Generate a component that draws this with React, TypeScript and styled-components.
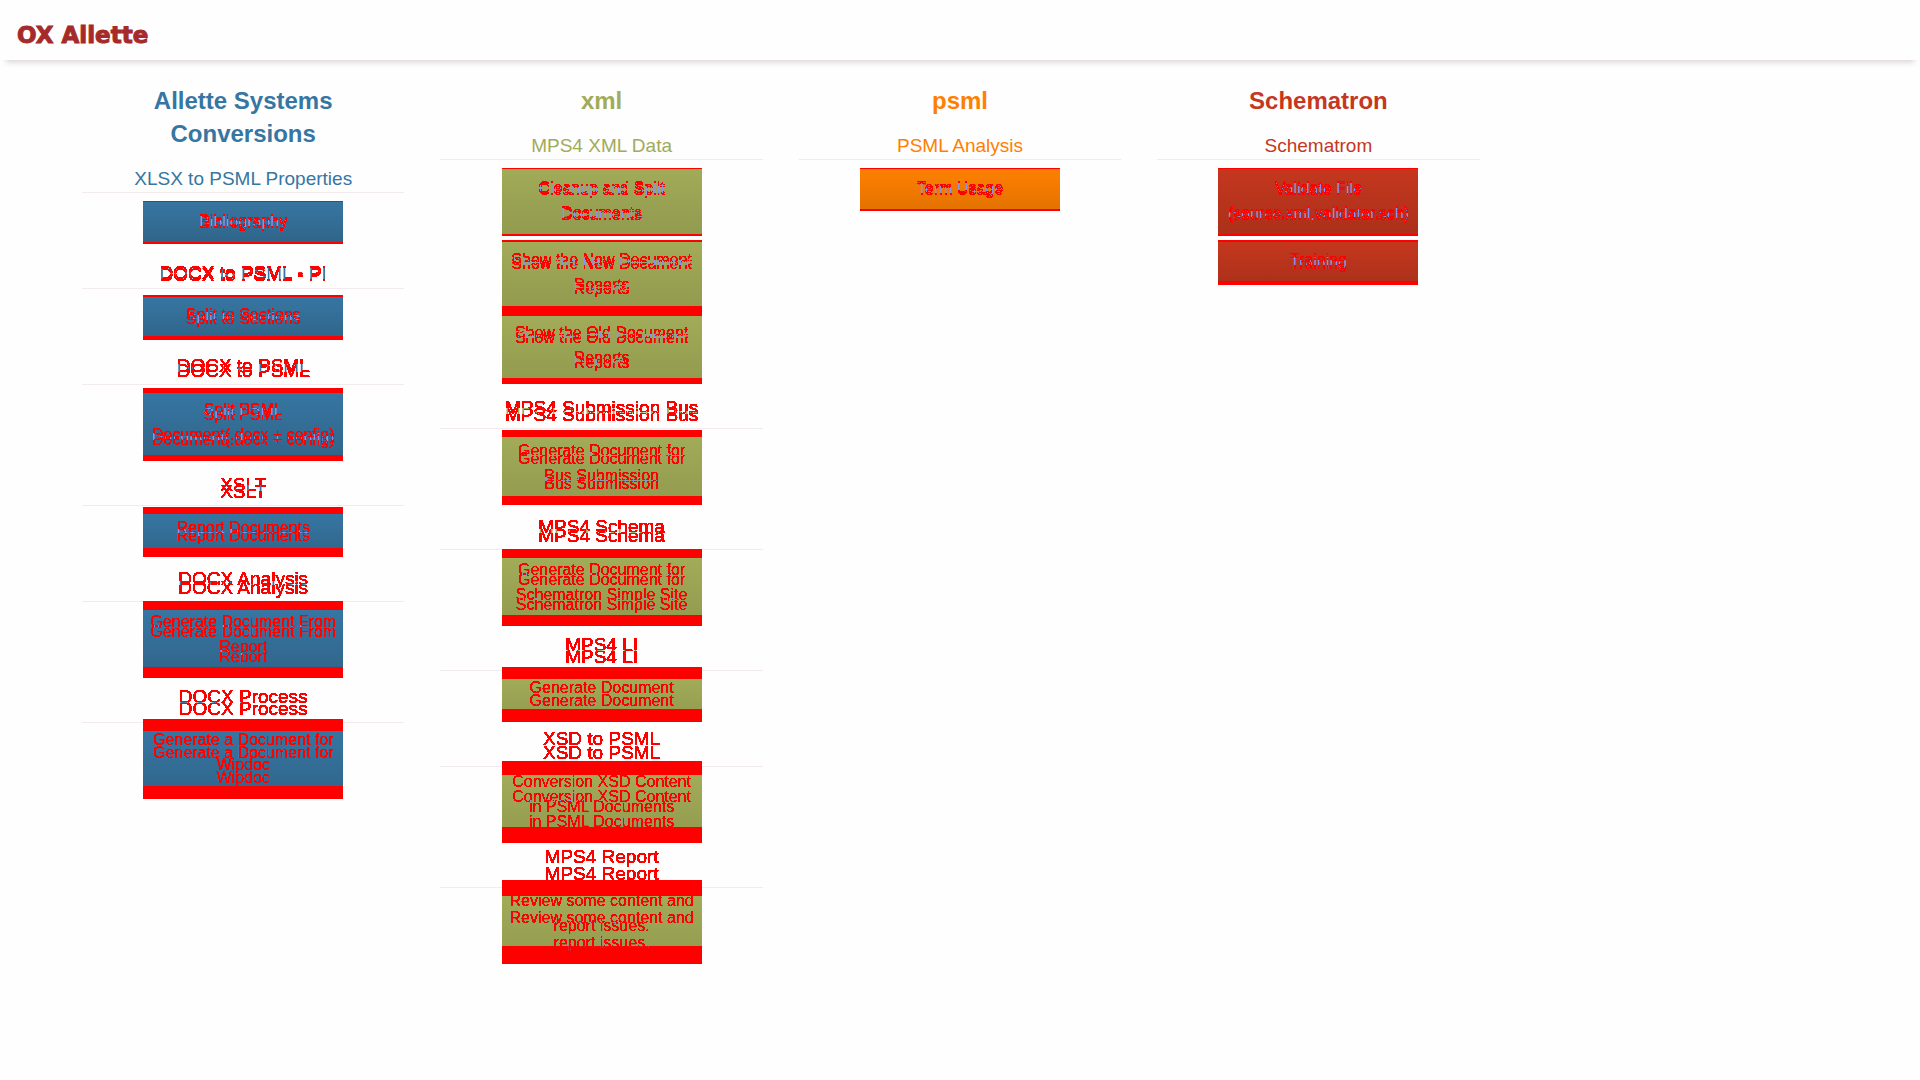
import React from "react";
import styled, { createGlobalStyle, css } from "styled-components";

const GlobalStyle = createGlobalStyle`
  * { box-sizing: border-box; }
  body {
    margin: 0;
    background: #fefefe;
    font-family: "Liberation Sans", Arial, sans-serif;
  }
`;

const RED = "#ff0000";

type Action = { label: string; top: number; bottom: number; shift: number };
type Group = { name: string; shift: number; actions: Action[] };
type Category = { title: string; from: string; to: string; groups: Group[] };

const act = (label: string, top: number, bottom: number, shift: number): Action => ({
  label,
  top,
  bottom,
  shift,
});

const categories: Category[] = [
  {
    title: "Allette Systems Conversions",
    from: "#3676a2",
    to: "#306489",
    groups: [
      { name: "XLSX to PSML Properties", shift: 0, actions: [act("Bibliography", 0, 2, 2)] },
      { name: "DOCX to PSML - PI", shift: 2, actions: [act("Split to Sections", 2, 4, 4)] },
      { name: "DOCX to PSML", shift: 5, actions: [act("Split PSML Document(.docx + config)", 5, 6, 5)] },
      { name: "XSLT", shift: 7, actions: [act("Report Documents", 7, 9, 8)] },
      { name: "DOCX Analysis", shift: 9, actions: [act("Generate Document From Report", 9, 11, 10)] },
      { name: "DOCX Process", shift: 12, actions: [act("Generate a Document for Wipdoc", 12, 13, 13)] },
    ],
  },
  {
    title: "xml",
    from: "#a2ab58",
    to: "#919a4e",
    groups: [
      {
        name: "MPS4 XML Data",
        shift: 0,
        actions: [
          act("Cleanup and Split Documents", 0, 2, 2),
          act("Show the New Document Reports", 2, 4, 4),
          act("Show the Old Document Reports", 6, 6, 5),
        ],
      },
      { name: "MPS4 Submission Bus", shift: 7, actions: [act("Generate Document for Bus Submission", 7, 9, 8)] },
      { name: "MPS4 Schema", shift: 9, actions: [act("Generate Document for Schematron Simple Site", 9, 11, 10)] },
      { name: "MPS4 LI", shift: 12, actions: [act("Generate Document", 12, 13, 13)] },
      { name: "XSD to PSML", shift: 14, actions: [act("Conversion XSD Content in PSML Documents", 14, 16, 15)] },
      { name: "MPS4 Report", shift: 17, actions: [act("Review some content and report issues.", 16, 18, 17)] },
    ],
  },
  {
    title: "psml",
    from: "#ff8000",
    to: "#e37200",
    groups: [{ name: "PSML Analysis", shift: 0, actions: [act("Term Usage", 0, 2, 2)] }],
  },
  {
    title: "Schematron",
    from: "#c5371e",
    to: "#ab301a",
    groups: [
      {
        name: "Schematrom",
        shift: 0,
        actions: [act("Validate File (source.xml,validator.sch)", 0, 2, 2), act("Training", 2, 4, 4)],
      },
    ],
  },
];

type Kind = "name" | "action";

const groups = categories.flatMap((c) => c.groups);
const unique = (values: number[]) => Array.from(new Set(values)).filter((s) => s > 0);
const nameShifts = unique(groups.map((g) => g.shift));
const actionShifts = unique(groups.flatMap((g) => g.actions.map((a) => a.shift)));

const Header = styled.header`
  height: 60px;
  padding: 0 17px;
  display: flex;
  align-items: center;
  background: #fefefe;
  box-shadow: 0 8px 6px -6px #d8d0d3;
`;

const Brand = styled.a`
  padding-top: 10px;
  font: 900 23px/28px "DejaVu Sans", sans-serif;
  color: #a52a2a;
  -webkit-text-stroke: 1px #a52a2a;
  text-decoration: none;
`;

const Board = styled.main`
  display: grid;
  grid-template-columns: repeat(5, 1fr);
  column-gap: 36px;
  align-items: start;
  padding: 24px 82px;
`;

const Column = styled.section<{ $color: string }>`
  display: flex;
  flex-direction: column;
  gap: 16px;
  color: ${(p) => p.$color};
  text-align: center;
`;

const Title = styled.h2`
  margin: 0;
  font-size: 24px;
  line-height: 33px;
  font-weight: bold;
`;

const Groups = styled.div`
  display: flex;
  flex-direction: column;
  gap: 18px;
`;

const GroupBox = styled.div`
  display: flex;
  flex-direction: column;
  align-items: center;
  gap: 6px;
`;

const GroupName = styled.h3`
  align-self: stretch;
  margin: 0 0 2px;
  border-bottom: 1px solid #f2ebed;
  font-size: 19px;
  line-height: 26px;
  font-weight: normal;
`;

const Shifted = styled.span<{ $kind: Kind; $shift: number }>`
  display: block;
  ${(p) =>
    p.$shift > 0 &&
    css`
      filter: url(#${p.$kind}-shift-${p.$shift});
    `}
`;

const ActionButton = styled.button<{ $from: string; $to: string; $top: number; $bottom: number }>`
  width: 200px;
  padding: 9px 6px;
  border: 0;
  background: linear-gradient(${(p) => p.$from}, ${(p) => p.$to});
  box-shadow:
    inset 0 ${(p) => (p.$top ? 0 : 1)}px ${RED},
    inset 0 -${(p) => p.$bottom}px ${RED},
    0 -${(p) => p.$top}px ${RED};
  color: #9090ee;
  font: 16px/25px "Liberation Sans", Arial, sans-serif;
  text-align: center;
  cursor: pointer;
`;

const Defs = styled.svg`
  position: absolute;
  width: 0;
  height: 0;
`;

// Paints red wherever the text and its raised copy disagree.
function ShiftFilter({ kind, shift }: { kind: Kind; shift: number }) {
  return (
    <filter
      id={`${kind}-shift-${shift}`}
      x="-5%"
      y="-100%"
      width="110%"
      height="300%"
      colorInterpolationFilters="sRGB"
    >
      <feOffset in="SourceAlpha" dy={-shift} result="raised" />
      <feComposite in="SourceAlpha" in2="raised" operator="arithmetic" k2="1" k3="-1" result="lower" />
      <feComposite in="raised" in2="SourceAlpha" operator="arithmetic" k2="1" k3="-1" result="upper" />
      <feComposite in="lower" in2="upper" operator="arithmetic" k2="1" k3="1" result="both" />
      <feComponentTransfer in="both" result="mask">
        <feFuncA type="linear" slope="20" intercept={kind === "name" ? -2 : -5} />
      </feComponentTransfer>
      <feFlood floodColor={RED} />
      <feComposite in2="mask" operator="in" result="edges" />
      <feMerge>
        <feMergeNode in="SourceGraphic" />
        <feMergeNode in="edges" />
      </feMerge>
    </filter>
  );
}

export default function App() {
  return (
    <>
      <GlobalStyle />
      <Defs aria-hidden="true">
        <defs>
          {nameShifts.map((s) => (
            <ShiftFilter key={`name-${s}`} kind="name" shift={s} />
          ))}
          {actionShifts.map((s) => (
            <ShiftFilter key={`action-${s}`} kind="action" shift={s} />
          ))}
        </defs>
      </Defs>
      <Header>
        <Brand href="#">OX Allette</Brand>
      </Header>
      <Board>
        {categories.map((c) => (
          <Column key={c.title} $color={c.from}>
            <Title>{c.title}</Title>
            <Groups>
              {c.groups.map((g) => (
                <GroupBox key={g.name}>
                  <GroupName>
                    <Shifted $kind="name" $shift={g.shift}>
                      {g.name}
                    </Shifted>
                  </GroupName>
                  {g.actions.map((a) => (
                    <ActionButton
                      key={a.label}
                      type="button"
                      $from={c.from}
                      $to={c.to}
                      $top={a.top}
                      $bottom={a.bottom}
                    >
                      <Shifted $kind="action" $shift={a.shift}>
                        {a.label}
                      </Shifted>
                    </ActionButton>
                  ))}
                </GroupBox>
              ))}
            </Groups>
          </Column>
        ))}
      </Board>
    </>
  );
}
